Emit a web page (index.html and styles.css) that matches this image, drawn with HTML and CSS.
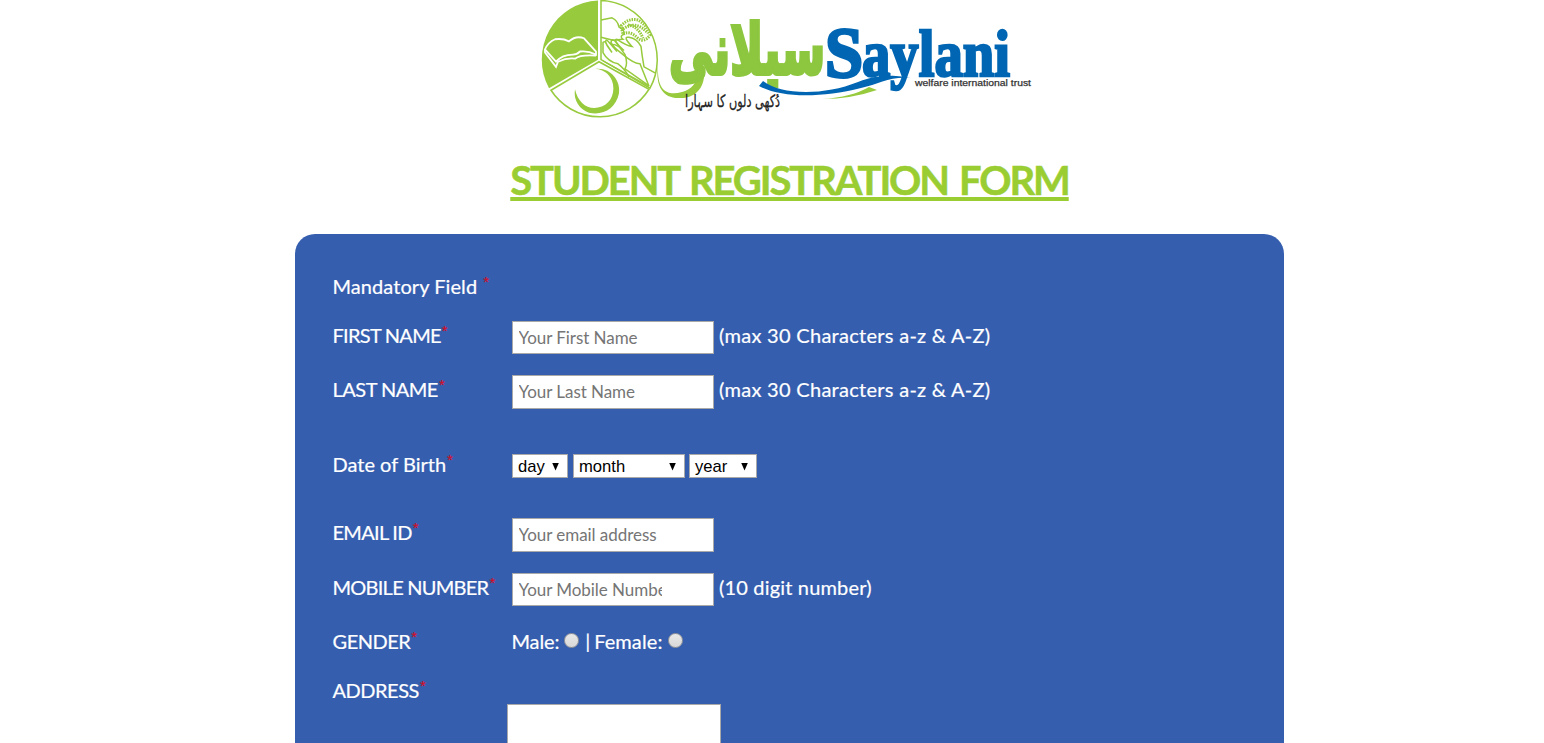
FILE: index.html
```
<!DOCTYPE html>
<html lang="en">
<head>
<meta charset="utf-8">
<title>Student Registration Form</title>
<link rel="stylesheet" href="styles.css">
</head>
<body>
<header class="header">
<svg class="logo" viewBox="535 0 500 122" width="500" height="122" role="img" aria-label="Saylani Welfare International Trust">
  <g class="emblem" transform="translate(0 -.5) scale(1 1.02)">
    <path class="green" d="M598 1A58 58 0 0 0 549 87L598 59Z"/>
    <path class="line" d="M601 1A58 58 0 0 1 650 87L601 59Z"/>
    <path class="line" d="M551 89L599 61L649 88A58.5 58.5 0 0 1 551 89Z"/>
    <path class="line thin" d="M603 60L649 85"/>
    <path class="book" d="M545 49Q548 42 555 39Q563 38 569 41Q576 35 584 38L596 51V54Q588 50 580 51Q577 54 573 54Q562 54 556 61Z"/>
    <path class="book" d="M545 49V52L556 66L558 61Q567 57 575 58Q580 54 596 55"/>
    <path class="green" d="M595 68C610 66 621 79 619 92C616 107 603 114 589 111C580 108 573 99 575 88C578 101 587 108 598 106C609 104 615 94 613 83C611 75 606 69 595 68Z"/>
    <path class="line" d="M601 20L612 18Q618 21 619 27Q625 30 624 34Q619 36 623 39L613 40L601 37"/>
    <path class="dots" d="M621 26Q628 18 638 20Q647 25 650 35Q644 43 638 38Q630 30 623 34ZM623 29Q636 20 648 33M628 25Q638 26 643 38"/>
    <path class="line" d="M629 76Q625 68 618 63Q608 61 603 52L603 42Q606 40 607 45L612 52L606 43Q605 37 609 42L617 51L611 42Q612 37 616 42L625 54Q628 63 625 68L648 84"/>
    <path class="line" d="M655 72L644 66Q642 55 641 46Q637 38 629 37Q622 36 632 46Q626 45 617 39Q612 39 624 50Q612 41 613 46L623 54Q634 63 640 63L649 85"/>
  </g>
  <path class="green" d="M658 66C657 91 667 96 682 92C691 90 697 83 698 73H704C705 89 693 99 680 98C664 99 655 87 658 66Z"/>
  <text class="urdu-name" x="825" y="74" textLength="156" lengthAdjust="spacingAndGlyphs" direction="rtl">سیلانی</text>
  <path class="dark" d="M763 81C781 95 823 96 858 82C884 72 901 77 911 78C890 76 879 84 861 88C821 98 781 98 759 86Z"/>
  <path class="green" d="M822 99Q852 97 869 87L877 90Q851 99 822 99Z"/>
  <text class="name-cap" x="825" y="77" textLength="38" lengthAdjust="spacingAndGlyphs">S</text>
  <text class="name" x="862" y="76" textLength="148" lengthAdjust="spacingAndGlyphs">aylani</text>
  <text class="urdu-tag" x="780" y="107" textLength="95" lengthAdjust="spacingAndGlyphs" direction="rtl">دُکھی دلوں کا سہارا</text>
  <text class="tag" x="915" y="86" textLength="116" lengthAdjust="spacingAndGlyphs">welfare international trust</text>
</svg>
<h1 class="title">STUDENT REGISTRATION FORM</h1>
</header>
<form class="card">
  <div class="row mandatory"><span class="label">Mandatory Field <sup>*</sup></span></div>
  <div class="row"><label class="label first">FIRST NAME<sup>*</sup></label><input class="field" placeholder="Your First Name"><span class="hint">(max 30 Characters a-z &amp; A-Z)</span></div>
  <div class="row tall"><label class="label last">LAST NAME<sup>*</sup></label><input class="field" placeholder="Your Last Name"><span class="hint">(max 30 Characters a-z &amp; A-Z)</span></div>
  <div class="row birth"><label class="label dob">Date of Birth<sup>*</sup></label><span class="select day">day<i class="arrow"></i></span><span class="select month">month<i class="arrow"></i></span><span class="select year">year<i class="arrow"></i></span></div>
  <div class="row tall"><label class="label email">EMAIL ID<sup>*</sup></label><input class="field" placeholder="Your email address"></div>
  <div class="row"><label class="label mobile">MOBILE NUMBER<sup>*</sup></label><input class="field" placeholder="Your Mobile Number"><span class="hint digits">(10 digit number)</span></div>
  <div class="row gender"><span class="label sex">GENDER<sup>*</sup></span><span class="choice">Male:</span><i class="radio"></i><span class="choice bar">|</span><span class="choice female">Female:</span><i class="radio"></i></div>
  <div class="row address"><label class="label addr">ADDRESS<sup>*</sup></label><textarea class="area"></textarea></div>
</form>
</body>
</html>
```
FILE: styles.css
```
* { box-sizing: border-box; }
body { margin: 0; height: 743px; overflow: hidden; background: #fff; font-family: Lato, sans-serif; }
.header { display: flex; flex-direction: column; align-items: center; width: 989px; margin-left: 295px; height: 234px; }
.logo { display: block; margin-right: 9px; flex: none; overflow: visible; }
.green { fill: #97ca3c; }
.line { fill: none; stroke: #97ca3c; stroke-width: 1.5; }
.thin { stroke-width: 1; }
.dots { fill: none; stroke: #97ca3c; stroke-width: 3; stroke-dasharray: 1.5 1; }
.book { fill: none; stroke: #fff; stroke-width: 1.8; }
.dark { fill: #0066b3; }
.urdu-name { font: bold 70px "DejaVu Sans", sans-serif; fill: #8dc63f; stroke: #8dc63f; stroke-width: 4; }
.name-cap { font: bold 72px "Liberation Serif", serif; fill: #0066b3; stroke: #0066b3; stroke-width: 3; }
.name { font: bold 66px "Liberation Serif", serif; fill: #0066b3; stroke: #0066b3; stroke-width: 2.5; }
.urdu-tag { font: 17px "DejaVu Sans", sans-serif; fill: #222; stroke: #222; stroke-width: .3; }
.tag { font: 9px "Liberation Sans", sans-serif; fill: #333; stroke: #333; stroke-width: .25; }
.title { margin: 34px 0 0; font-size: 40px; line-height: 48px; font-weight: 700; letter-spacing: -2.14px; word-spacing: 3.5px; color: #9acd32; white-space: nowrap; text-decoration: underline; text-decoration-thickness: 4px; text-underline-offset: 2px; text-decoration-skip-ink: none; -webkit-text-stroke: .5px #9acd32; }
.card { width: 989px; height: 509px; overflow: hidden; margin: 0 0 0 295px; padding: 36px 38px 0; border-radius: 20px 20px 0 0; background: #355eaf; color: #fff; font-size: 20px; line-height: 33px; -webkit-text-stroke: .2px; }
.row { display: flex; align-items: center; height: 33px; margin-bottom: 21px; white-space: nowrap; }
.mandatory { margin-bottom: 18px; }
.tall { height: 34px; }
.row.birth { height: 24px; margin: 45px 0 40px; }
.gender { margin-bottom: 16px; }
.label { width: 179px; flex: none; margin: -4px 0 0 -.5px; }
.tall .label, .tall .hint { margin-top: -5px; }
.mandatory .label { margin-top: -1px; letter-spacing: .07px; }
.address .label { margin-top: -2px; }
.first { letter-spacing: -.72px; }
.last { letter-spacing: -.5px; }
.email { letter-spacing: -.7px; }
.mobile { letter-spacing: -.75px; }
.sex, .addr { letter-spacing: -.48px; }
sup { font: 15px/0 "Liberation Sans", sans-serif; color: #d00f28; vertical-align: 7px; letter-spacing: 0; margin-left: 1px; }
.field { width: 202px; height: 100%; border: 1px solid #a9a9a9; padding: 0 51px 1px 5.5px; background: #fff; font: 17px Lato, sans-serif; letter-spacing: -.05px; margin: 0 5px 0 .5px; -webkit-text-stroke: 0; }
.field::placeholder { color: #757575; opacity: 1; }
.hint { margin-top: -4px; letter-spacing: .29px; }
.digits { letter-spacing: .17px; }
.select { display: flex; align-items: center; justify-content: space-between; height: 24px; padding: 1px 8px 0 5px; border: 1px solid #a9a9a9; background: #fff; color: #000; font: 16.6px "Liberation Sans", sans-serif; -webkit-text-stroke: 0; }
.day { width: 56px; margin: 0 5px 0 .5px; }
.month { width: 112px; margin-right: 4px; }
.year { width: 68px; }
.arrow { width: 7px; height: 8px; background: #000; clip-path: polygon(0 0, 100% 0, 50% 100%); }
.choice { margin-top: -4px; letter-spacing: -.15px; }
.female { letter-spacing: .1px; }
.radio { width: 15px; height: 15px; border-radius: 50%; border: 1px solid #999; background: linear-gradient(#e8e8e8, #d8d8d8); margin: 0 6px 6px 5px; }
.bar { margin-right: 4px; }
.address { align-items: flex-start; }
.area { width: 214px; height: 80px; flex: none; margin: 28px 0 0 -4.5px; border: 1px solid #a9a9a9; background: #fff; resize: none; }
```
